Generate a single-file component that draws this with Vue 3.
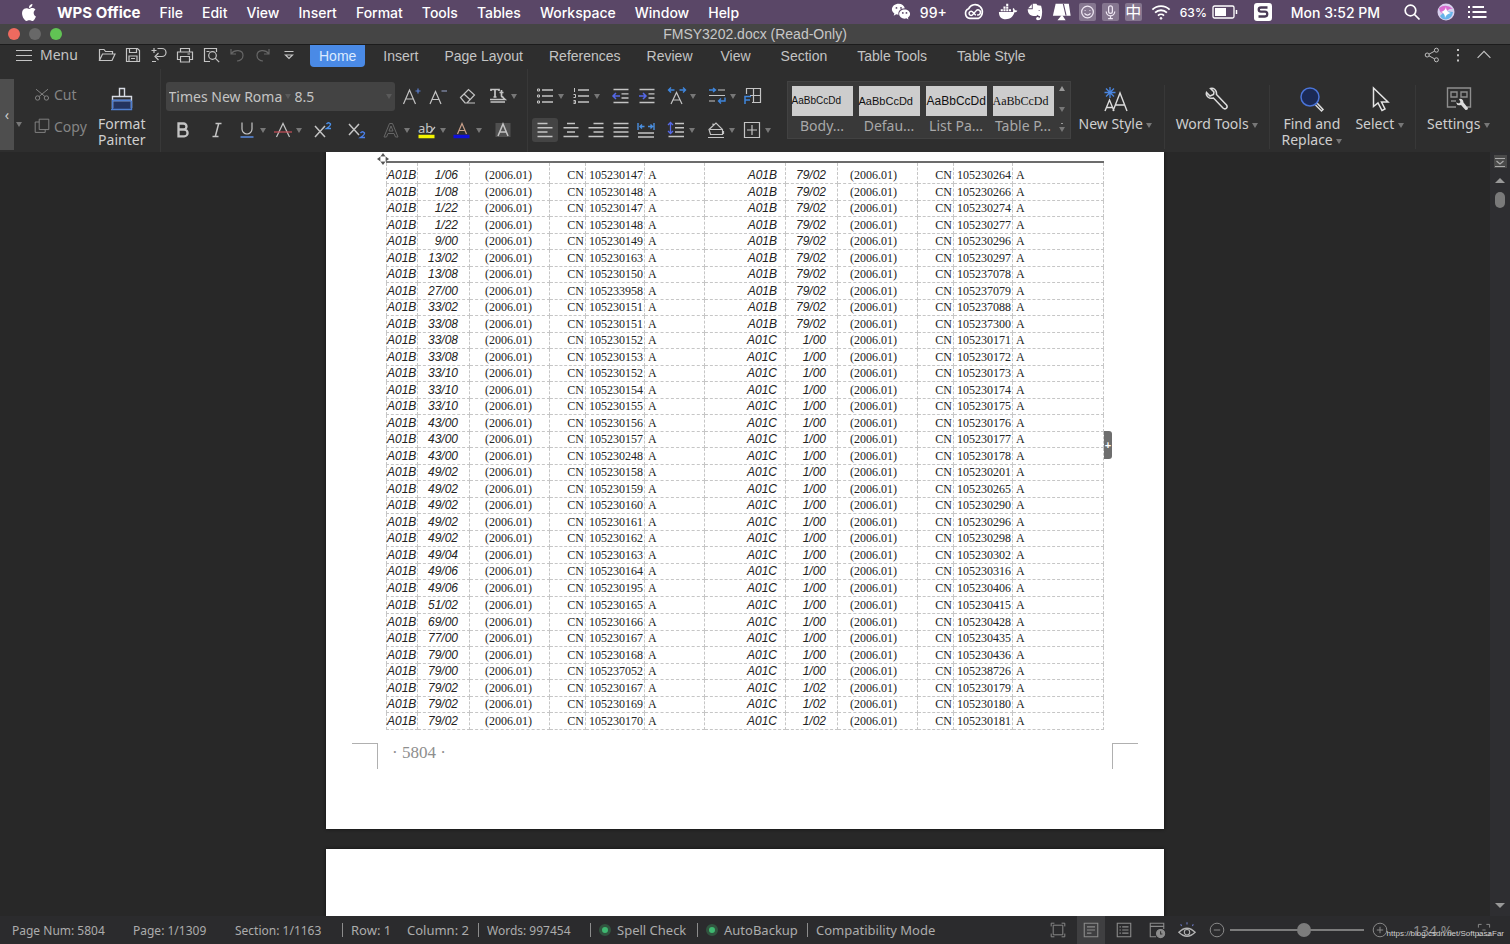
<script setup>
import { ref } from 'vue'

const appMenus = ['File', 'Edit', 'View', 'Insert', 'Format', 'Tools', 'Tables', 'Workspace', 'Window', 'Help']

const quick = [
  { label: 'Open', icon: 'open' },
  { label: 'Save', icon: 'save' },
  { label: 'Export as PDF', icon: 'pdf' },
  { label: 'Print', icon: 'print' },
  { label: 'Print preview', icon: 'preview' },
  { label: 'Undo', icon: 'undo', dim: true },
  { label: 'Redo', icon: 'redo', dim: true },
  { label: 'Customize', icon: 'more' }
]

const tabs = ['Home', 'Insert', 'Page Layout', 'References', 'Review', 'View', 'Section', 'Table Tools', 'Table Style']
const activeTab = ref('Home')

const fontRow1 = [
  { label: 'Grow font', icon: 'grow', gap: 'm4' },
  { label: 'Shrink font', icon: 'shrink' },
  { label: 'Clear formatting', icon: 'eraser', gap: 'm4' },
  { label: 'Change case', icon: 'textcase', caret: true, gap: 'm4' }
]
const fontRow2 = [
  { label: 'Bold', icon: 'bold' },
  { label: 'Italic', icon: 'italic', gap: 'm8' },
  { label: 'Underline', icon: 'underline', caret: true, gap: 'm4' },
  { label: 'Strikethrough', icon: 'strike', caret: true },
  { label: 'Superscript', icon: 'sup', gap: 'm4' },
  { label: 'Subscript', icon: 'sub', gap: 'm8' },
  { label: 'Text effects', icon: 'effects', caret: true, gap: 'm8', dim: true },
  { label: 'Highlight', icon: 'highlight', caret: true },
  { label: 'Font color', icon: 'color', caret: true },
  { label: 'Character shading', icon: 'shadeA', gap: 'm4' }
]
const paraRow1 = [
  { label: 'Bullets', icon: 'bullets', caret: true },
  { label: 'Numbering', icon: 'numbers', caret: true },
  { label: 'Decrease indent', icon: 'outdent', gap: 'm4' },
  { label: 'Increase indent', icon: 'indent' },
  { label: 'Character scaling', icon: 'scale', caret: true, gap: 'm4' },
  { label: 'Text direction', icon: 'wrap', caret: true, gap: 'm4' },
  { label: 'Tabs', icon: 'tabs' }
]
const paraRow2 = [
  { label: 'Align left', icon: 'left', on: true },
  { label: 'Center', icon: 'center', narrow: true },
  { label: 'Align right', icon: 'right', narrow: true },
  { label: 'Justify', icon: 'justify', narrow: true },
  { label: 'Distribute', icon: 'distribute' },
  { label: 'Line spacing', icon: 'spacing', caret: true, gap: 'm4' },
  { label: 'Shading', icon: 'bucket', caret: true, gap: 'm4' },
  { label: 'Borders', icon: 'borders', caret: true }
]

const styles = [
  { name: 'Body...', cls: 's-small' },
  { name: 'Defau...', cls: 's-mid' },
  { name: 'List Pa...', cls: 's-big' },
  { name: 'Table P...', cls: 's-serif' }
]

const icons = {
  open: '<path d="M2.500 15.500V4.500h4.500l1.500 2h7v2.500M2.500 15.500h12.500l3-6.500H5.500z"/>',
  save: '<path d="M3.500 3.500h11l2 2v11h-13zM6.500 3.500v4h7v-4M6 16.500v-5.500h8v5.500M8 13.500h4"/>',
  pdf: '<path d="M2.500 5.500h5M5 3v5M8.500 3.500h4.500a4 4 0 0 1 0 8H7.500M9.500 8l-3.500 3.500 3.500 3.500M3 16.500h4"/>',
  print: '<path d="M5.500 7V3.500h9V7M5.500 14.500h-3v-7.500h15v7.500h-3M5.500 11.500h9v5.500h-9zM12.500 9h2.500"/>',
  preview: '<path d="M9 16.500H3.500v-13h12V7M5.500 6.500h3"/><circle cx="11.500" cy="10.500" r="3.800"/><path d="M14.200 13.200l4 4"/>',
  undo: '<path d="M4 4v5h5M4.500 8.500C7 4.500 16 4 16 10.500c0 3.500-3 5.500-6 5.500"/>',
  redo: '<path d="M16 4v5h-5M15.500 8.500C13 4.500 4 4 4 10.500c0 3.500 3 5.500 6 5.500"/>',
  more: '<path d="M5.500 6.500h9M6.500 10l3.500 3.500L13.500 10z"/>',
  grow: '<path d="M1.500 18L7.500 4l6 14M3.700 13h7.600"/><path d="M16 2.500v5M13.500 5h5" stroke="#5b7fd0"/>',
  shrink: '<path d="M2 18L7.500 5.500l5.500 12.500M4 13.500h7"/><path d="M13.500 5h5.500" stroke="#8a94b4"/>',
  eraser: '<path d="M2.500 11.500L10.500 3.500l6 5.500-7.500 8H7zM6 8l6.500 6M7 17h10"/>',
  textcase: '<path d="M3 5V3.500h8V5M7 3.500V11M5.500 11h3M13.500 4v6q0 1 2 1M11.500 6.500h4M2 13.500h15l-2.500-2.500M17 16H2.500" stroke-width="1.700"/>',
  bold: '<path d="M5.500 3.500h5a3 3 0 0 1 0 6h-5zM5.500 9.500h5.700a3.400 3.400 0 0 1 0 6.800H5.500z" stroke-width="2.300"/>',
  italic: '<path d="M8.500 3.500h6M5.500 16.500h6M11.700 3.500L8.300 16.500" stroke-width="1.500"/>',
  underline: '<path d="M5 2.500v6.500a5 5 0 0 0 10 0V2.500" /><path d="M3.500 17h13" stroke="#5b8de0" stroke-width="1.500"/>',
  strike: '<path d="M3.500 17L10 3.500 16.500 17"/><path d="M1 12h18" stroke="#c8505a"/>',
  sup: '<path d="M2 6l10 11M12 6L2 17" stroke-width="1.500"/><path d="M13.500 4q2-2.500 4 0 .5 1.500-4 4.500h4.500" stroke="#4a8fe8" stroke-width="1.400"/>',
  sub: '<path d="M2 4l10 11M12 4L2 15" stroke-width="1.500"/><path d="M13.500 13q2-2.500 4 0 .5 1.500-4 4.500h4.500" stroke="#4a7fe8" stroke-width="1.400"/>',
  effects: '<path d="M3 17L8.500 3.500h3L17 17h-2.500l-1.500-3.500H7L5.500 17zM8 11h4l-2-5z" stroke-width="1"/>',
  highlight: '<path d="M1.500 16.500h16" stroke="#f4f400" stroke-width="3.500"/><text x="1" y="13" font-size="13" fill="currentColor" stroke="none">ab</text><path d="M13 13l5-6"/>',
  color: '<path d="M0.500 16.500h16" stroke="#1010d8" stroke-width="3.500"/><path d="M4.500 14L9 3.500 13.500 14M6 10.500h6" stroke="#c9a08a"/>',
  shadeA: '<rect x="2.500" y="3" width="15" height="14" fill="#505050" stroke="none"/><path d="M5 16L10 4l5 12M6.700 12h6.600" stroke-width="1.500"/>',
  bullets: '<path d="M7 4h11M7 10h11M7 16h11" stroke-width="1.500"/><path d="M2.500 3h2v2h-2zM2.500 9h2v2h-2zM2.500 15h2v2h-2z" stroke-width="1"/>',
  numbers: '<path d="M7 4h11M7 10h11M7 16h11" stroke-width="1.500"/><path d="M3.500 2v4M2.500 8.500h2v3h-2M2.500 14.500h2v3h-2M2.500 16h2" stroke-width="1"/>',
  outdent: '<path d="M2.500 3.500h15M10.500 7.800h7M10.500 12h7M2.500 16.500h15" stroke-width="1.300"/><path d="M9 10H2M5 7l-3 3 3 3" stroke="#5468e8" stroke-width="1.500"/>',
  indent: '<path d="M2.500 3.500h15M11.500 7.800h6M11.500 12h6M2.500 16.500h15" stroke-width="1.300"/><path d="M2 10h7M6 7l3 3-3 3" stroke="#5468e8" stroke-width="1.500"/>',
  scale: '<path d="M4 18L9.500 6.500 15 18M6 14h7"/><path d="M1.500 4h6M4 1.500L1.500 4 4 6.500M18.500 4h-6M16 1.500L18.500 4 16 6.500" stroke="#3f86dd" stroke-width="1.400"/>',
  wrap: '<path d="M11 4h7M2 9.500h16M2 15h6" /><path d="M2 4h6M6 2l2.500 2L6 6M18 11.500V15h-6M14 12.500L11.500 15l2.500 2.500" stroke="#3f86dd" stroke-width="1.400"/>',
  tabs: '<path d="M3.500 8V2.500h14v14H9M10.500 2.500v14M7 9.500h10.500"/><path d="M2 18v-7.500h6M2 14h5" stroke="#3f86dd" stroke-width="1.500"/>',
  left: '<path d="M2.500 3.500h10M2.500 7.800h15M2.500 12h10M2.500 16.500h15" stroke-width="1.400"/>',
  center: '<path d="M6 3.500h8M2.500 7.800h15M6 12h8M2.500 16.500h15" stroke-width="1.400"/>',
  right: '<path d="M7.500 3.500h10M2.500 7.800h15M7.500 12h10M2.500 16.500h15" stroke-width="1.400"/>',
  justify: '<path d="M2.500 3.500h15M2.500 7.800h15M2.500 12h15M2.500 16.500h15" stroke-width="1.400"/>',
  distribute: '<path d="M2 13h16M2 17h16" stroke-width="1.400"/><path d="M2 3v7M18 3v7M4 6.500h4.500M12 6.500h4.500M6 4.500l-2 2 2 2M14.500 4.500l2 2-2 2" stroke="#4a8fe0" stroke-width="1.400"/>',
  spacing: '<path d="M9 3.500h9M9 7.800h9M9 12h9M2.500 16.500h15.500" stroke-width="1.400"/><path d="M4.500 2.500v11M2 5l2.500-2.500L7 5M2 11l2.500 2.500L7 11" stroke="#5468e8" stroke-width="1.300"/>',
  bucket: '<path d="M3 9.500L10 3l6.500 6.500v5h-12zM4 9.500h12.500M7 6V3.500M17.500 11v3M2 17.500h16"/>',
  borders: '<path d="M2.500 2.500h15v15h-15zM10 5v10M5 10h10"/>',
  cut: '<circle cx="4.500" cy="15" r="2.700"/><circle cx="15.500" cy="15" r="2.700"/><path d="M2.500 4l11 9M17.500 4l-11 9"/>',
  copy: '<path d="M6.500 1.500h12v13h-12zM6.500 5h-5v13H14v-3.500"/>'
}

const base = n => 105230000 + n
const leftGroups = [
  ['1/06', 147], ['1/08', 148], ['1/22', 147, 148], ['9/00', 149], ['13/02', 163], ['13/08', 150],
  ['27/00', 3958], ['33/02', 151], ['33/08', 151, 152, 153], ['33/10', 152, 154, 155],
  ['43/00', 156, 157, 248], ['49/02', 158, 159, 160, 161, 162], ['49/04', 163], ['49/06', 164, 195],
  ['51/02', 165], ['69/00', 166], ['77/00', 167], ['79/00', 168, 7052], ['79/02', 167, 169, 170]
]
const rightGroups = [
  ['79/02', 264, 266, 274, 277, 296, 297, 7078, 7079, 7088, 7300],
  ['1/00', 171, 172, 173, 174, 175, 176, 177, 178, 201, 265, 290, 296, 298, 302, 316, 406, 415, 428, 435, 436, 8726],
  ['1/02', 179, 180, 181]
]
const expand = groups => groups.flatMap(([code, ...ids]) => ids.map(id => ({ code, id: base(id) })))
const rightRows = expand(rightGroups)
const rows = expand(leftGroups).map((l, i) => ({
  l,
  r: rightRows[i],
  section: i < 10 ? 'A01B' : 'A01C'
}))

const zoom = ref(50)
const fontName = ref('Times New Roma')
const fontSize = ref('8.5')
</script>

<template>
  <div class="desktop">
    <header class="menubar">
      <nav class="mb-left" aria-label="Application menu">
        <svg class="apple" viewBox="0 0 24 24" fill="#fff"><path d="M12.152 6.896c-.948 0-2.415-1.078-3.960-1.040-2.040.027-3.910 1.183-4.961 3.014-2.117 3.675-.546 9.103 1.519 12.090 1.013 1.454 2.208 3.090 3.792 3.039 1.520-.065 2.090-.987 3.935-.987 1.831 0 2.350.987 3.960.948 1.637-.026 2.676-1.480 3.676-2.948 1.156-1.688 1.636-3.325 1.662-3.415-.039-.013-3.182-1.221-3.220-4.857-.026-3.040 2.480-4.494 2.597-4.559-1.429-2.090-3.623-2.324-4.390-2.376-2-.156-3.675 1.090-4.610 1.090zM15.530 3.830c.843-1.012 1.400-2.427 1.245-3.830-1.207.052-2.662.805-3.532 1.818-.78.896-1.454 2.338-1.273 3.714 1.338.104 2.715-.688 3.559-1.701" /></svg>
        <button class="mb-item app-name">WPS Office</button>
        <button v-for="m in appMenus" :key="m" class="mb-item">{{ m }}</button>
      </nav>
      <div class="mb-right">
        <svg class="i22" viewBox="0 0 22 22" fill="#fff"><path d="M8.500 2C4.300 2 1 4.700 1 8.100c0 1.900 1 3.500 2.700 4.600L3 15l2.700-1.400c.8.300 1.500.4 2.500.4-.7-3.900 2.500-7 7-7C14.600 4.100 11.800 2 8.500 2z" /><path d="M21 13.300c0-2.800-2.700-5-6-5s-6 2.200-6 5 2.700 5 6 5c.7 0 1.300-.1 2-.3l2.200 1.200-.6-2c1.500-.9 2.400-2.300 2.400-3.900z" /><g fill="#5a4767"><circle cx="6" cy="6.500" r="1" /><circle cx="11" cy="6.500" r="1" /><circle cx="13" cy="12" r="1" /><circle cx="17" cy="12" r="1" /></g></svg>
        <span class="count">99+</span>
        <svg class="i22 g1" viewBox="0 0 22 22" fill="none" stroke="#fff" stroke-width="1.800"><path d="M6.500 18A5.500 5.500 0 0 1 5 7.500 8 8 0 1 1 16 18z" /><path d="M13 14.500l-4-4a2.300 2.300 0 1 0 0 4l4.500-5a2.700 2.700 0 1 1 1 4.500" stroke-width="1.600" /></svg>
        <svg class="i22 g2" viewBox="0 0 22 22" fill="#fff"><path d="M1 11h15.500c.4-1.200.2-2.300-.4-3.200l1-1.300c.9.700 1.300 1.600 1.400 2.600 1-.2 2 0 2.800.5-.6 1.200-1.700 1.800-3.200 1.800C16.500 16.500 13.500 19 8.500 19 3.800 19 1 16.300 1 11z" /><path d="M3 8h2.300v2.300H3zM6 8h2.300v2.300H6zM9 8h2.300v2.300H9zM12 8h2.300v2.300H12zM6 5h2.300v2.300H6zM9 5h2.300v2.300H9zM9 2h2.300v2.300H9z" /></svg>
        <svg class="i22 t1" viewBox="0 0 22 22" fill="#fff"><path d="M7.500 2.500v4.500H3.500zM8.500 2h4l1.200 1.500 4 .7c1.600 4.500 1.500 9.500 0 14-.5 1.500-2 1.800-3.500 1.800-2.500 0-2.500-3.500-.2-3.500h1V18c1 0 1.500-.5 1.500-2.500-1.500 0-2-.7-2.500-1.500-.7 1.400-2.300 1.500-4.500 1.300C5 15 3 12 3 8h5.500z" /><path d="M14.500 9q1.700-.5 2 1-1-.4-2-1z" fill="#5a4767" /></svg>
        <svg class="i22 t1" viewBox="0 0 22 22" fill="#fff"><path d="M4 2h14.500l2 13H1z" /><path d="M6 20l5-6 4 6z" /><path d="M12.500 2l3 13" stroke="#5a4767" stroke-width="1.200" /></svg>
        <svg class="i17 sq" viewBox="0 0 18 18" fill="none" stroke="#f0e8f4" stroke-width="1.300"><circle cx="9" cy="9" r="6.200" /><path d="M5.800 10.500q3.200 3.500 6.400 0M6.500 7v.8M11.500 7v.8" /></svg>
        <svg class="i17 sq" viewBox="0 0 18 18" fill="none" stroke="#f0e8f4" stroke-width="1.300"><rect x="7" y="2.500" width="4" height="8" rx="2" /><path d="M4.500 8.500a4.500 4.500 0 0 0 9 0M9 13v3M6.500 16h5" /></svg>
        <span class="zh sq">中</span>
        <svg class="i22" viewBox="0 0 22 22" fill="none" stroke="#fff" stroke-width="2"><path d="M1.500 8.500a13.500 13.500 0 0 1 19 0M4.500 11.700a9.300 9.300 0 0 1 13 0M7.700 14.900a4.800 4.800 0 0 1 6.600 0" /><circle cx="11" cy="18" r="1" fill="#fff" stroke-width="1" /></svg>
        <span class="pct">63%</span>
        <svg class="batt" viewBox="0 0 26 14" fill="none" stroke="#fff"><rect x="1" y="1" width="21" height="12" rx="1.500" stroke-width="1.300" /><rect x="3" y="3" width="11" height="8" fill="#fff" stroke="none" /><path d="M24.500 5v4" stroke-width="1.500" /></svg>
        <svg class="i18 g1" viewBox="0 0 18 18"><rect width="18" height="18" rx="3" fill="#fff" /><path d="M13.500 4.500H7C4 4.500 4 8.700 7 8.700h4c3 0 3 4.800 0 4.800H4.500" fill="none" stroke="#4a3b56" stroke-width="2.300" /></svg>
        <time class="clock">Mon 3:52 PM</time>
        <svg class="i18 g3" viewBox="0 0 18 18" fill="none" stroke="#fff" stroke-width="1.700"><circle cx="7.500" cy="7.500" r="5.300" /><path d="M11.500 11.500l5 5" /></svg>
        <svg class="i18 g1" viewBox="0 0 18 18"><circle cx="9" cy="9" r="8.500" fill="#d8d0ee" /><path d="M2 5q7-5 14 1-5-1-8 5-5 0-6-6z" fill="#d86bd0" /><path d="M3 13q5-6 13-4-1 7-7 7.500-4 0-6-3.500z" fill="#68b4ea" /><path d="M9 4q0 5 5 6-5 1-6 5 0-5-4-6 4-1 5-5z" fill="#fff" /></svg>
        <svg class="i20 g2" viewBox="0 0 20 18" fill="none" stroke="#fff" stroke-width="2"><path d="M5.500 4H17M5.500 9h14M5.500 14h14M1 4h2M1 9h2M1 14h2" /></svg>
      </div>
    </header>

    <div class="titlebar">
      <div class="lights">
        <button class="light red" aria-label="Close"></button>
        <button class="light grey" aria-label="Minimize"></button>
        <button class="light green" aria-label="Zoom"></button>
      </div>
      <h1>FMSY3202.docx (Read-Only)</h1>
    </div>

    <div class="tabrow">
      <button class="menu-btn">
        <svg class="burger" viewBox="0 0 16 12" stroke="currentColor" stroke-width="1.200"><path d="M0 1.500h16M0 6.500h16M0 11.500h16" /></svg>
        Menu
      </button>
      <div class="quick">
        <button v-for="q in quick" :key="q.label" class="qb" :class="{ dim: q.dim }" :aria-label="q.label">
          <svg class="ic20" viewBox="0 0 20 20" v-html="icons[q.icon]"></svg>
        </button>
      </div>
      <nav class="tabs" aria-label="Ribbon tabs">
        <button v-for="t in tabs" :key="t" class="tab" :class="{ active: t === activeTab }" @click="activeTab = t">{{ t }}</button>
      </nav>
      <div class="tab-right">
        <button class="qb" aria-label="Share"><svg class="ic16" viewBox="0 0 20 20"><circle cx="4" cy="10" r="2.500" /><circle cx="15.500" cy="4" r="2.500" /><circle cx="15.500" cy="16" r="2.500" /><path d="M6.200 9l7-3.800M6.200 11l7 3.800" /></svg></button>
        <button class="qb" aria-label="More"><svg class="ic16" viewBox="0 0 20 20"><path d="M10 2.500v2.500M10 9v2.500M10 15.500V18" stroke-width="2.500" /></svg></button>
        <button class="qb" aria-label="Collapse ribbon"><svg class="ic16" viewBox="0 0 20 20"><path d="M2 13.500l8-8 8 8" stroke-width="1.500" /></svg></button>
      </div>
    </div>

    <div class="ribbon">
      <button class="edge" aria-label="Scroll ribbon left">‹</button>
      <section class="clip">
        <i class="caret paste-caret"></i>
        <div class="cc">
          <button class="txtbtn"><svg class="ic16" viewBox="0 0 20 20" v-html="icons.cut"></svg>Cut</button>
          <button class="txtbtn"><svg class="ic16" viewBox="0 0 20 20" v-html="icons.copy"></svg>Copy</button>
        </div>
        <button class="big painter">
          <svg class="ic26" viewBox="0 0 26 26"><path d="M3.500 13h19v10.500h-19z" fill="#24345f" stroke="none" /><path d="M10.500 10V2.500h5V10M3.500 22V10.500h19V22M3.500 14.500h19" stroke="#d8dce4" stroke-width="1.400" /><path d="M2 23.500h20.500V15M3.500 23V14.500h19" stroke="#4f7fd0" stroke-width="1.400" /></svg>
          <span>Format<br>Painter</span>
        </button>
      </section>

      <section class="group font-group">
        <div class="row">
          <div class="fontbox">
            <input v-model="fontName" class="fname" aria-label="Font name">
            <i class="caret faint"></i>
            <input v-model="fontSize" class="fsize" aria-label="Font size">
            <i class="caret faint"></i>
          </div>
          <button v-for="b in fontRow1" :key="b.label" class="ib" :class="[b.gap, { wide: b.caret }]" :aria-label="b.label">
            <svg class="ic20" viewBox="0 0 20 20" v-html="icons[b.icon]"></svg><i v-if="b.caret" class="caret"></i>
          </button>
        </div>
        <div class="row inset">
          <button v-for="b in fontRow2" :key="b.label" class="ib" :class="[b.gap, { wide: b.caret, dim: b.dim }]" :aria-label="b.label">
            <svg class="ic20" viewBox="0 0 20 20" v-html="icons[b.icon]"></svg><i v-if="b.caret" class="caret"></i>
          </button>
        </div>
      </section>

      <section class="group para-group">
        <div class="row">
          <button v-for="b in paraRow1" :key="b.label" class="ib" :class="[b.gap, { wide: b.caret }]" :aria-label="b.label">
            <svg class="ic20" viewBox="0 0 20 20" v-html="icons[b.icon]"></svg><i v-if="b.caret" class="caret"></i>
          </button>
        </div>
        <div class="row">
          <button v-for="b in paraRow2" :key="b.label" class="ib" :class="[b.gap, { wide: b.caret, on: b.on, narrow: b.narrow }]" :aria-label="b.label">
            <svg class="ic20" viewBox="0 0 20 20" v-html="icons[b.icon]"></svg><i v-if="b.caret" class="caret"></i>
          </button>
        </div>
      </section>

      <section class="gallery">
        <button v-for="s in styles" :key="s.name" class="style">
          <span class="sample" :class="s.cls">AaBbCcDd</span>
          <span class="sname">{{ s.name }}</span>
        </button>
        <div class="gal-arrows"><i class="caret up"></i><i class="caret"></i><i class="caret lined"></i></div>
      </section>

      <section class="bigs">
        <button class="big">
          <svg class="ic26" viewBox="0 0 26 26"><path d="M2 25l4.500-11L11 25M3.500 21.500h6M10 25l7-18 7 18M12.300 19h9.400" stroke="#dcdcdc" stroke-width="1.400" /><path d="M7 1v11M1.500 6.500h11M3 2.500l8 8M11 2.500l-8 8" stroke="#4a86e0" stroke-width="1.300" /></svg>
          <span>New Style <i class="caret"></i></span>
        </button>
        <i class="sep"></i>
        <button class="big">
          <svg class="ic26" viewBox="0 0 26 26"><path d="M6.500 2.500C9 1.500 13 3.500 12.500 8.500L22.500 19c2 3-1.500 5-3.500 3L9.500 12C5 13.500 1.500 9.500 2.500 6.500L6 10l3.500-1.500L10 6z" stroke="#dcdcdc" stroke-width="1.500" /></svg>
          <span>Word Tools <i class="caret"></i></span>
        </button>
        <i class="sep"></i>
        <div class="pair">
          <button class="big">
            <svg class="ic26" viewBox="0 0 26 26"><path d="M18 17l6 6.500-1.500 1.500-6-6" stroke="#dcdcdc" stroke-width="1.500" /><circle cx="11" cy="11" r="9" fill="#1b2a55" stroke="#4a74d8" stroke-width="1.500" /></svg>
            <span>Find and<br>Replace <i class="caret"></i></span>
          </button>
          <button class="big">
            <svg class="ic26" viewBox="0 0 26 26"><path d="M6.500 2v18.500l4.500-3.500 4 7.500 3-1.500-3.500-7h6.500z" stroke="#e4e4e4" stroke-width="1.500" /></svg>
            <span>Select <i class="caret"></i></span>
          </button>
        </div>
        <i class="sep"></i>
        <button class="big">
          <svg class="ic26" viewBox="0 0 26 26"><path d="M10 21H1.500V2h23v19H21M5 6h6v5H5zM15 6h6v5h-6zM5 15h5" stroke="#8e8e8e" stroke-width="1.400" /><path d="M13 13q4-1 4.500 3.500l4.500 5.500q0 2.500-2.500 2l-4.500-5q-4 1-5-2.500l3 1 1.500-1.500z" fill="#dcdcdc" stroke="none" /></svg>
          <span>Settings <i class="caret"></i></span>
        </button>
      </section>
    </div>

    <main class="work">
      <div class="canvas">
        <article class="page first">
          <svg class="mover" viewBox="0 0 14 14" fill="#555"><path d="M4 4l3-4 3 4zM4 10l3 4 3-4zM4 4L0 7l4 3zM10 4l4 3-4 3z" /><path d="M4.500 4.500h5v5h-5z" fill="#fff" /></svg>
          <table>
            <colgroup><col v-for="n in 12" :key="n" :class="'c' + n"></colgroup>
            <tbody>
              <tr v-for="(row, i) in rows" :key="i">
                <td class="it">A01B</td>
                <td class="it num">{{ row.l.code }}</td>
                <td class="yr">(2006.01)</td>
                <td class="cn">CN</td>
                <td class="id">{{ row.l.id }}</td>
                <td class="id">A</td>
                <td class="it sec">{{ row.section }}</td>
                <td class="it num">{{ row.r.code }}</td>
                <td class="yr2">(2006.01)</td>
                <td class="cn">CN</td>
                <td class="id">{{ row.r.id }}</td>
                <td class="id">A</td>
              </tr>
            </tbody>
          </table>
          <button class="addcol" aria-label="Add column">+</button>
          <footer class="pfoot">
            <i class="corner cl"></i>
            <span>· 5804 ·</span>
            <i class="corner cr"></i>
          </footer>
        </article>
        <article class="page second"></article>
      </div>
      <aside class="vbar">
        <button class="vtool" aria-label="Navigation"><svg class="ic10" viewBox="0 0 10 10"><path d="M0 1.500h10M1.500 4L5 7l3.500-3M0 9.500h10" /></svg></button>
        <i class="caret up large"></i>
        <i class="thumb"></i>
        <i class="caret down large"></i>
      </aside>
    </main>

    <footer class="status">
      <span class="s1">Page Num: 5804</span>
      <span class="s2">Page: 1/1309</span>
      <span class="s3">Section: 1/1163</span>
      <span class="s4 bar">Row: 1</span>
      <span class="s5">Column: 2</span>
      <span class="s6 bar">Words: 997454</span>
      <button class="s7 bar"><i class="dot"></i>Spell Check</button>
      <button class="s8 bar"><i class="dot"></i>AutoBackup</button>
      <span class="s9 bar">Compatibility Mode</span>
      <div class="views">
        <button class="vb" aria-label="Full screen"><svg class="ic16" viewBox="0 0 20 20"><path d="M4 4h12v12H4zM1.500 5.500v-4h4M14.500 1.500h4v4M18.500 14.500v4h-4M5.500 18.500h-4v-4" /></svg></button>
        <button class="vb on" aria-label="Print layout"><svg class="ic18" viewBox="0 0 20 20"><path d="M2.500 2.500h15v15h-15zM5.500 6.500h9M5.500 10h9M5.500 13.500h5" /></svg></button>
        <button class="vb" aria-label="Outline"><svg class="ic18" viewBox="0 0 20 20"><path d="M2.500 2.500h15v15h-15zM8 6.500h7M8 10h7M8 13.500h7M5 6.500h1.500M5 10h1.500M5 13.500h1.500" /></svg></button>
        <button class="vb" aria-label="Web layout"><svg class="ic18" viewBox="0 0 20 20"><path d="M9 17.500H2.500v-15h15V9M2.500 6h15" /><circle cx="14" cy="14" r="4.500" fill="#8c8c8c" /><path d="M14 11.500v3h2" stroke="#333" /></svg></button>
        <button class="vb eye" aria-label="Eye protection"><svg class="ic18" viewBox="0 0 20 20"><path d="M1 12.500q9-9 18 0-9 9-18 0z" stroke-width="1.500" /><circle cx="10" cy="12.500" r="3" /><path d="M4 5.500L3 3.500M10 4V1.500M16 5.500l1-2" stroke="#6b78c0" /></svg></button>
      </div>
      <div class="zoomer">
        <button class="zb" aria-label="Zoom out"><svg class="ic16" viewBox="0 0 20 20"><circle cx="10" cy="10" r="8.500" /><path d="M6 10h8" /></svg></button>
        <input v-model="zoom" type="range" min="0" max="90" aria-label="Zoom level">
        <button class="zb" aria-label="Zoom in"><svg class="ic16" viewBox="0 0 20 20"><circle cx="10" cy="10" r="8.500" /><path d="M6 10h8M10 6v8" /></svg></button>
        <output>134 %</output>
        <button class="zb" aria-label="Fit"><svg class="ic16" viewBox="0 0 20 20"><path d="M3 7V3h4M13 3h4v4M17 13v4h-4M7 17H3v-4M8 10h4" /></svg></button>
      </div>
      <span class="watermark">https://blog.csdn.net/SoftpasaFar</span>
    </footer>
  </div>
</template>

<style>
html, body { margin: 0; background: #282828; }
</style>

<style scoped>
* { box-sizing: border-box; }
button, input { font: inherit; color: inherit; background: none; border: 0; padding: 0; margin: 0; }
button { cursor: pointer; }
svg { display: block; flex: none; overflow: visible; }
.ic10, .ic16, .ic18, .ic20, .ic26 { fill: none; stroke: currentColor; stroke-width: 1.2; }
.ic10 { width: 10px; height: 10px; }
.ic16 { width: 16px; height: 16px; }
.ic18 { width: 18px; height: 18px; }
.ic20 { width: 20px; height: 20px; }
.ic26 { width: 26px; height: 26px; }

.desktop {
  height: 100vh;
  display: flex;
  flex-direction: column;
  overflow: hidden;
  background: #282828;
  color: #c4c4c4;
  font-family: "Noto Sans", "Open Sans", sans-serif;
  font-size: 14px;
}

.menubar {
  flex: none;
  height: 24px;
  display: flex;
  justify-content: space-between;
  background: #5a4767;
  color: #fff;
  font: 500 14px/23px Inter, Roboto, sans-serif;
}
.mb-left { display: flex; align-items: center; gap: 19px; padding-left: 20px; }
.apple { width: 18px; height: 17px; }
.mb-item { white-space: nowrap; }
.app-name { font-weight: 700; font-size: 15px; }
.mb-right { display: flex; align-items: center; gap: 8px; padding-right: 23px; white-space: nowrap; }
.i22 { width: 22px; height: 20px; }
.i20 { width: 20px; height: 18px; }
.i18 { width: 18px; height: 18px; }
.i17 { width: 17px; height: 18px; }
.g1 { margin-left: 8px; }
.g2 { margin-left: 4px; }
.g3 { margin-left: 15px; }
.t1 { margin-left: -3px; }
.sq { background: #85768f; border-radius: 2px; margin-left: -2px; }
.zh { width: 17px; height: 18px; font: 16px/17px "Noto Sans CJK SC", sans-serif; text-align: center; }
.pct { font-size: 12px; margin-right: -3px; }
.batt { width: 26px; height: 14px; }
.clock { margin-left: 11px; }

.titlebar {
  flex: none;
  position: relative;
  height: 21px;
  display: flex;
  align-items: center;
  justify-content: center;
  padding-left: 0;
  background: #454545;
  border-bottom: 1px solid #1c1c1c;
}
.titlebar h1 { margin: 0; font: 400 14px/20px "Liberation Sans", sans-serif; color: #c8c8c8; }
.lights { position: absolute; left: 8px; top: 4px; display: flex; gap: 9px; }
.light { width: 12px; height: 12px; border-radius: 50%; }
.red { background: #ee6a5f; }
.grey { background: #686868; }
.green { background: #61c354; }

.tabrow { flex: none; height: 24px; display: flex; align-items: flex-start; background: #2e2e2e; padding-left: 16px; }
.menu-btn { display: flex; align-items: center; gap: 8px; width: 78px; height: 20px; line-height: 20px; }
.burger { width: 16px; height: 12px; }
.quick, .tab-right { display: flex; }
.qb { width: 26px; height: 20px; display: flex; align-items: center; justify-content: center; }
.dim { color: #666; }
.tabs { display: flex; margin-left: 8px; font: 400 14px/20px "Liberation Sans", sans-serif; }
.tab { padding: 0 13px; white-space: nowrap; }
.tab:nth-child(n+6) { padding: 0 15px; }
.tab.active { height: 22px; padding: 0 9px; margin-right: 5px; background: #4a8ae6; color: #dceaff; border-radius: 0 0 4px 4px; }
.tab-right { margin-left: auto; padding-right: 13px; }

.ribbon { flex: none; height: 83px; display: flex; background: #2e2e2e; white-space: nowrap; }
.edge { width: 14px; height: 71px; margin-top: 10px; background: #4e4e4e; color: #ccc; flex: none; }
.clip { display: flex; flex: none; padding-top: 10px; }
.caret { flex: none; display: inline-block; width: 0; height: 0; border: 3px solid transparent; border-top: 5px solid #777; border-bottom: 0; vertical-align: middle; }
.caret.up { border-top: 0; border-bottom: 5px solid #999; }
.caret.large { border-left-width: 5px; border-right-width: 5px; }
.caret.faint { border-top-color: #5a5a5a; }
.paste-caret { margin: 43px 12px 0 2px; }
.cc { display: flex; flex-direction: column; gap: 4px; width: 62px; padding-top: 1px; }
.txtbtn { display: flex; align-items: center; gap: 4px; height: 28px; color: #858585; }
.big { display: flex; flex-direction: column; align-items: center; gap: 4px; padding-top: 7px; line-height: 16px; color: #cfcfcf; }
.big span { text-align: center; }
.painter { padding-left: 2px; }
.pair { display: flex; gap: 13px; }
.sep { width: 1px; height: 64px; margin-top: 6px; background: #383838; }

.group { display: flex; flex-direction: column; gap: 8px; flex: none; padding-top: 13px; }
.font-group { width: 367px; margin-left: 14px; padding-left: 5px; border-left: 1px solid #383838; }
.para-group { width: 254px; padding-left: 4px; border-left: 1px solid #383838; }
.row { display: flex; align-items: center; height: 28px; }
.row.inset { padding-left: 4px; }
.row:last-child { height: 24px; }
.fontbox { display: flex; align-items: center; width: 229px; height: 29px; padding: 0 3px; background: #434343; border-radius: 3px; }
.fname { width: 116px; }
.fsize { flex: 1; min-width: 0; margin-left: 4px; }
.ib { display: flex; align-items: center; width: 26px; height: 24px; padding-left: 3px; flex: none; border-radius: 3px; }
.ib.wide { width: 36px; gap: 3px; }
.ib.narrow { width: 25px; }
.ib.on { background: #444; }
.m4 { margin-left: 4px; }
.m8 { margin-left: 8px; }

.gallery { display: flex; gap: 6px; flex: none; width: 284px; height: 58px; margin: 12px 0 0 6px; padding: 4px 0 0 4px; background: #393939; border: 1px solid #424242; }
.style { display: flex; flex-direction: column; align-items: center; width: 61px; }
.sample { display: flex; align-items: center; width: 61px; height: 30px; background: #cdcdcd; color: #111; }
.s-small { font: 10px/16px "Liberation Sans", sans-serif; }
.s-mid { font: 11px/16px "Liberation Sans", sans-serif; }
.s-big { font: 12px/16px "Liberation Sans", sans-serif; padding-left: 1px; }
.s-serif { font: 12px/16px "Liberation Serif", serif; }
.sname { line-height: 20px; color: #a8a8a8; }
.gal-arrows { display: flex; flex-direction: column; justify-content: space-between; padding: 0 0 6px; margin-left: -1px; }
.caret.lined { box-shadow: 0 -6px 0 -2px #999; }

.bigs { display: flex; flex: 1; justify-content: space-between; align-items: stretch; padding: 10px 20px 0 8px; }

.work { flex: 1; min-height: 0; display: flex; }
.canvas { flex: 1; min-width: 0; overflow: hidden; display: flex; flex-direction: column; align-items: center; gap: 20px; }
.page { flex: none; width: 838px; max-width: 100%; background: #fff; color: #222; box-shadow: 0 0 3px #111; }
.page.first { position: relative; padding: 9px 60px 0; }
.page.second { height: 80px; }
.mover { position: absolute; left: 51px; top: 1px; width: 12px; height: 12px; }
.addcol { position: absolute; right: 52px; top: 279px; width: 8px; height: 28px; background: #6e6e6e; color: #fff; font: 700 11px/28px "Liberation Sans", sans-serif; border-radius: 0 3px 3px 0; }
table { width: 100%; table-layout: fixed; border-collapse: collapse; border-top: 2px solid #6c6c6c; font: 12px/14px "Liberation Serif", serif; }
td { height: 16px; padding: 0; border: 1px dashed #c6c6c6; white-space: nowrap; vertical-align: middle; }
tr:first-child td { height: 21px; border-top: 2px solid #6c6c6c; padding-top: 4px; }
tr:nth-child(even) td, tr:nth-child(27) td { height: 17px; }
.it { font: italic 12px/14px "Liberation Sans", sans-serif; }
.num { text-align: right; padding-right: 11px; }
.yr { padding-left: 15px; }
.yr2 { padding-left: 12px; }
.cn { text-align: right; padding-right: 1px; }
.id { padding-left: 3px; }
.sec { text-align: right; padding-right: 8px; }
.c1 { width: 31px; }
.c2, .c8 { width: 52px; }
.c3 { width: 80px; }
.c4, .c10 { width: 36px; }
.c5 { width: 59px; }
.c6 { width: 60px; }
.c7 { width: 81px; }
.c9 { width: 80px; }
.c11 { width: 59px; }
.c12 { width: 91px; }
.pfoot { display: flex; margin: 13px -34px 0; height: 86px; font: 17px/20px "Liberation Serif", serif; color: #8e8e8e; }
.pfoot span { flex: 1; padding-left: 14px; word-spacing: normal; white-space: pre; }
.corner { width: 26px; height: 26px; border-top: 1px solid #b0b0b0; }
.cl { border-right: 1px solid #b0b0b0; }
.cr { border-left: 1px solid #b0b0b0; }

.vbar { width: 20px; flex: none; display: flex; flex-direction: column; align-items: center; background: #2e2e31; color: #aaa; }
.vtool { display: flex; align-items: center; justify-content: center; width: 13px; height: 13px; margin: 3px 0 10px; background: #4a4a4a; }
.thumb { width: 10px; height: 16px; margin-top: 9px; border-radius: 5px; background: #7a7a7a; }
.caret.down { margin: auto 0 8px; border-top-color: #999; }

.status { flex: none; position: relative; height: 28px; display: flex; align-items: center; padding: 0 18px 0 12px; background: #2b2b2d; font-size: 12px; color: #acacac; white-space: nowrap; }
.status > span, .status > button { flex: none; }
.bar { display: flex; align-items: center; }
.bar::before { content: ""; width: 1px; height: 14px; margin-right: 8px; background: #8c8c8c; }
.s4, .s5, .s7, .s8, .s9 { font-size: 13px; }
.s1 { width: 121px; }
.s2 { width: 102px; }
.s3 { width: 107px; }
.s4 { width: 65px; }
.s5 { width: 71px; }
.s6 { width: 112px; }
.s7 { width: 107px; }
.s8 { width: 110px; }
.dot { width: 12px; height: 12px; margin-right: 6px; border-radius: 50%; background: #3fb871; border: 3px solid #31543f; }
.views { display: flex; margin-left: auto; }
.vb { width: 28px; height: 28px; margin-left: 5px; display: flex; align-items: center; justify-content: center; color: #8c8c8c; }
.vb.on { background: #3f3f41; }
.vb.eye { margin-left: 2px; color: #b4b4b4; }
.zoomer { display: flex; align-items: center; margin-left: 8px; color: #8c8c8c; }
.zoomer input { appearance: none; width: 134px; height: 14px; margin: 0 8px 0 5px; }
.zoomer input::-webkit-slider-runnable-track { height: 2px; background: #7c7c7c; }
.zoomer input::-webkit-slider-thumb { appearance: none; width: 14px; height: 14px; margin-top: -6px; border-radius: 50%; background: #7c7c7c; }
.zoomer output { width: 64px; padding-left: 25px; font-size: 14px; }
.zoomer .zb:last-child { margin-left: 24px; }
.watermark { position: absolute; right: 6px; bottom: 5px; font: 8px/10px "Liberation Sans", sans-serif; color: #d0d0d0; pointer-events: none; }
</style>
